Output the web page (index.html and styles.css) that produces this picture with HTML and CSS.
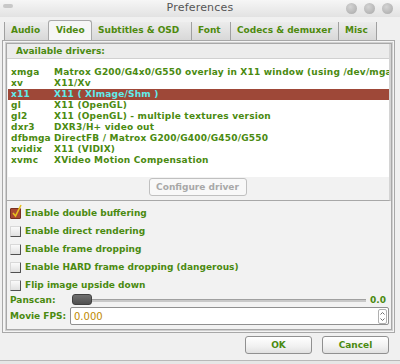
FILE: index.html
```html
<!DOCTYPE html>
<html>
<head>
<meta charset="utf-8">
<link rel="stylesheet" href="styles.css">
</head>
<body>
<div class="window">
  <div class="titlebar">
    <div class="grip"></div>
    <div class="title">Preferences</div>
    <div class="dots"><span></span><span></span><span></span></div>
  </div>
  <div class="tabs">
    <div class="tab t-audio">Audio</div>
    <div class="tab active t-video">Video</div>
    <div class="tab t-subs">Subtitles &amp; OSD</div>
    <div class="tab t-font">Font</div>
    <div class="tab t-codecs">Codecs &amp; demuxer</div>
    <div class="tab t-misc">Misc</div>
  </div>
  <div class="panel">
    <div class="frame">
      <div class="drivers">
        <div class="list-head">Available drivers:</div>
        <div class="list">
          <div class="row"><span class="c1">xmga</span><span class="c2">Matrox G200/G4x0/G550 overlay in X11 window (using /dev/mga_vid)</span></div>
          <div class="row"><span class="c1">xv</span><span class="c2">X11/Xv</span></div>
          <div class="row sel"><span class="c1">x11</span><span class="c2">X11 ( XImage/Shm )</span></div>
          <div class="row"><span class="c1">gl</span><span class="c2">X11 (OpenGL)</span></div>
          <div class="row"><span class="c1">gl2</span><span class="c2">X11 (OpenGL) - multiple textures version</span></div>
          <div class="row"><span class="c1">dxr3</span><span class="c2">DXR3/H+ video out</span></div>
          <div class="row"><span class="c1">dfbmga</span><span class="c2">DirectFB / Matrox G200/G400/G450/G550</span></div>
          <div class="row"><span class="c1">xvidix</span><span class="c2">X11 (VIDIX)</span></div>
          <div class="row"><span class="c1">xvmc</span><span class="c2">XVideo Motion Compensation</span></div>
        </div>
        <div class="cfg-area"><div class="cfg-btn">Configure driver</div></div>
      </div>
      <div class="options">
        <div class="check"><span class="box checked"><svg width="14" height="16" viewBox="0 0 14 16"><path d="M3 10 L5.5 13 L11 2" fill="none" stroke="#e8c020" stroke-width="1.6"/></svg></span>Enable double buffering</div>
        <div class="check"><span class="box"></span>Enable direct rendering</div>
        <div class="check"><span class="box"></span>Enable frame dropping</div>
        <div class="check"><span class="box"></span>Enable HARD frame dropping (dangerous)</div>
        <div class="check"><span class="box"></span>Flip image upside down</div>
        <div class="slider-row">
          <span class="lbl">Panscan:</span>
          <div class="track"><div class="handle"></div></div>
          <span class="val">0.0</span>
        </div>
        <div class="fps-row">
          <span class="lbl">Movie FPS:</span>
          <div class="input"><span class="num">0.000</span><div class="spin"><svg width="7" height="13" viewBox="0 0 7 13"><path d="M1.5 4.5 L3.5 2.5 L5.5 4.5 M1.5 8.5 L3.5 10.5 L5.5 8.5" fill="none" stroke="#707070" stroke-width="1"/></svg></div></div>
        </div>
      </div>
    </div>
  </div>
  <div class="buttons">
    <div class="btn">OK</div>
    <div class="btn">Cancel</div>
  </div>
</div>
</body>
</html>
```
FILE: styles.css
```css
* { box-sizing: border-box; }
html, body { margin: 0; padding: 0; }
body {
  width: 400px; height: 364px; overflow: hidden;
  background: #e6e6e6;
  font-family: "DejaVu Sans", sans-serif;
  font-size: 9px;
  color: #4a8a10;
}
.window {
  width: 400px; height: 361px;
  background: #f0f0f0;
  border-bottom: 1px solid #b8b8b8;
  display: flex; flex-direction: column;
}
.titlebar {
  height: 17px;
  background: linear-gradient(#f6f6f6, #e2e2e2);
  display: flex; align-items: center;
  position: relative;
}
.grip {
  width: 10px; height: 4px; border-radius: 2px; background: #c8c8c8;
  margin-left: 3px; margin-top: -6px;
}
.title {
  position: absolute; left: 0; right: 0; top: 1px; text-align: center;
  font-size: 11px; color: #555; letter-spacing: 0.2px;
}
.dots { margin-left: auto; display: flex; gap: 7px; margin-right: 7px; }
.dots span {
  width: 11px; height: 11px; border-radius: 50%;
  background: radial-gradient(circle at 40% 35%, #d4d4d4, #a8a8a8);
}
.tabs {
  display: flex; align-items: flex-end;
  height: 23px; padding-left: 4px;
}
.tab {
  height: 18px; line-height: 17px;
  padding: 0 0 0 6px;
  background: linear-gradient(#ececec, #d8d8d8);
  border-left: 1px solid #a0a0a0;
  font-weight: bold;
  color: #4e8a0e;
}
.tab.active {
  height: 20px; line-height: 19px;
  background: #f6f6f6;
  border: 1px solid #a8a8a8; border-bottom: none;
  border-radius: 3px 3px 0 0;
}
.t-audio { width: 44px; }
.t-video { width: 44px; padding-left: 7px; }
.t-subs { width: 99px; border-left: none; }
.t-font { width: 39px; }
.t-codecs { width: 108px; }
.t-misc { width: 39px; border-right: 1px solid #a0a0a0; }
.panel {
  margin: 0 5px 0 2px;
  height: 293px;
  border: 1px solid #a8a8a8;
  padding: 2px 2px 2px 3px;
  background: #f4f4f4;
}
.frame {
  height: 100%;
  border: 1px solid #a8a8a8;
  outline: 1px solid #d0d0d0;
  display: flex; flex-direction: column;
  background: #f2f2f2;
}
.drivers {
  border-bottom: 1px solid #a8a8a8;
  border-right: 2px solid #d4d4d4;
}
.list-head {
  height: 15px; line-height: 15px;
  padding-left: 9px;
  background: #ececec;
  font-weight: bold;
  border-bottom: 1px solid #d0d0d0;
}
.list {
  background: #fff;
  height: 118px;
  padding-top: 8px;
  margin-left: 1px;
  overflow: hidden;
}
.row {
  display: flex; height: 11.05px; line-height: 11.05px;
  white-space: nowrap; font-weight: bold; overflow: hidden;
  letter-spacing: 0.2px;
}
.row.sel { background: #9e4838; color: #60ecec; }
.c1 { width: 46px; padding-left: 3px; flex: none; }
.c2 { flex: none; }
.cfg-area { height: 23px; display: flex; justify-content: center; align-items: flex-start; padding: 1px 1px 0 0; }
.cfg-btn {
  width: 98px; height: 18px; line-height: 16px; text-align: center;
  border: 1px solid #c0c0c0; border-radius: 3px;
  background: #f8f8f8;
  color: #a8a8a8; font-weight: bold;
}
.options { padding: 3px 0 0 3px; display: flex; flex-direction: column; }
.check {
  height: 18px; display: flex; align-items: center;
  font-weight: bold; gap: 4px;
}
.box {
  width: 11px; height: 11px; flex: none;
  background: linear-gradient(#fafafa, #e0e0e0);
  border: 1px solid #d8d8d8;
  border-right-color: #505050; border-bottom-color: #505050;
  border-radius: 1px;
  position: relative;
}
.box.checked {
  background: #a84832; border: 1px solid #7a3020;
}
.box svg { position: absolute; left: -1px; top: -6px; }
.slider-row { display: flex; align-items: center; height: 12px; font-weight: bold; }
.lbl { width: 62px; flex: none; }
.track {
  flex: 1; height: 3px; background: #c8c8c8; border-top: 1px solid #a0a0a0;
  position: relative; margin-right: 4px;
}
.handle {
  position: absolute; left: 0; top: -6px;
  width: 20px; height: 11px; border-radius: 3px;
  background: linear-gradient(#707070, #505050);
  border: 1px solid #404040;
}
.val { width: 18px; margin-right: 3px; }
.fps-row { display: flex; align-items: center; height: 20px; font-weight: bold; }
.fps-row .lbl { width: 60px; }
.input {
  flex: 1; height: 18px; margin-right: 2px;
  border: 1px solid #909090; border-radius: 2px;
  background: #fff;
  display: flex; align-items: center; justify-content: space-between;
}
.num { color: #c08a00; padding-left: 3px; font-weight: normal; font-size: 10px; }
.spin {
  width: 9px; height: 15px; border: 1px solid #b0b0b0; border-radius: 2px;
  margin-right: 1px; display: flex; align-items: center; justify-content: center;
}
.buttons { display: flex; justify-content: flex-end; gap: 10px; padding: 3px 11px 0 0; }
.btn {
  width: 67px; height: 18px; line-height: 16px; text-align: center;
  border: 1px solid #909090; border-radius: 3px;
  background: linear-gradient(#ffffff, #f0f0f0 60%, #e0e0e0);
  font-weight: bold; color: #4a8a10;
}
```
